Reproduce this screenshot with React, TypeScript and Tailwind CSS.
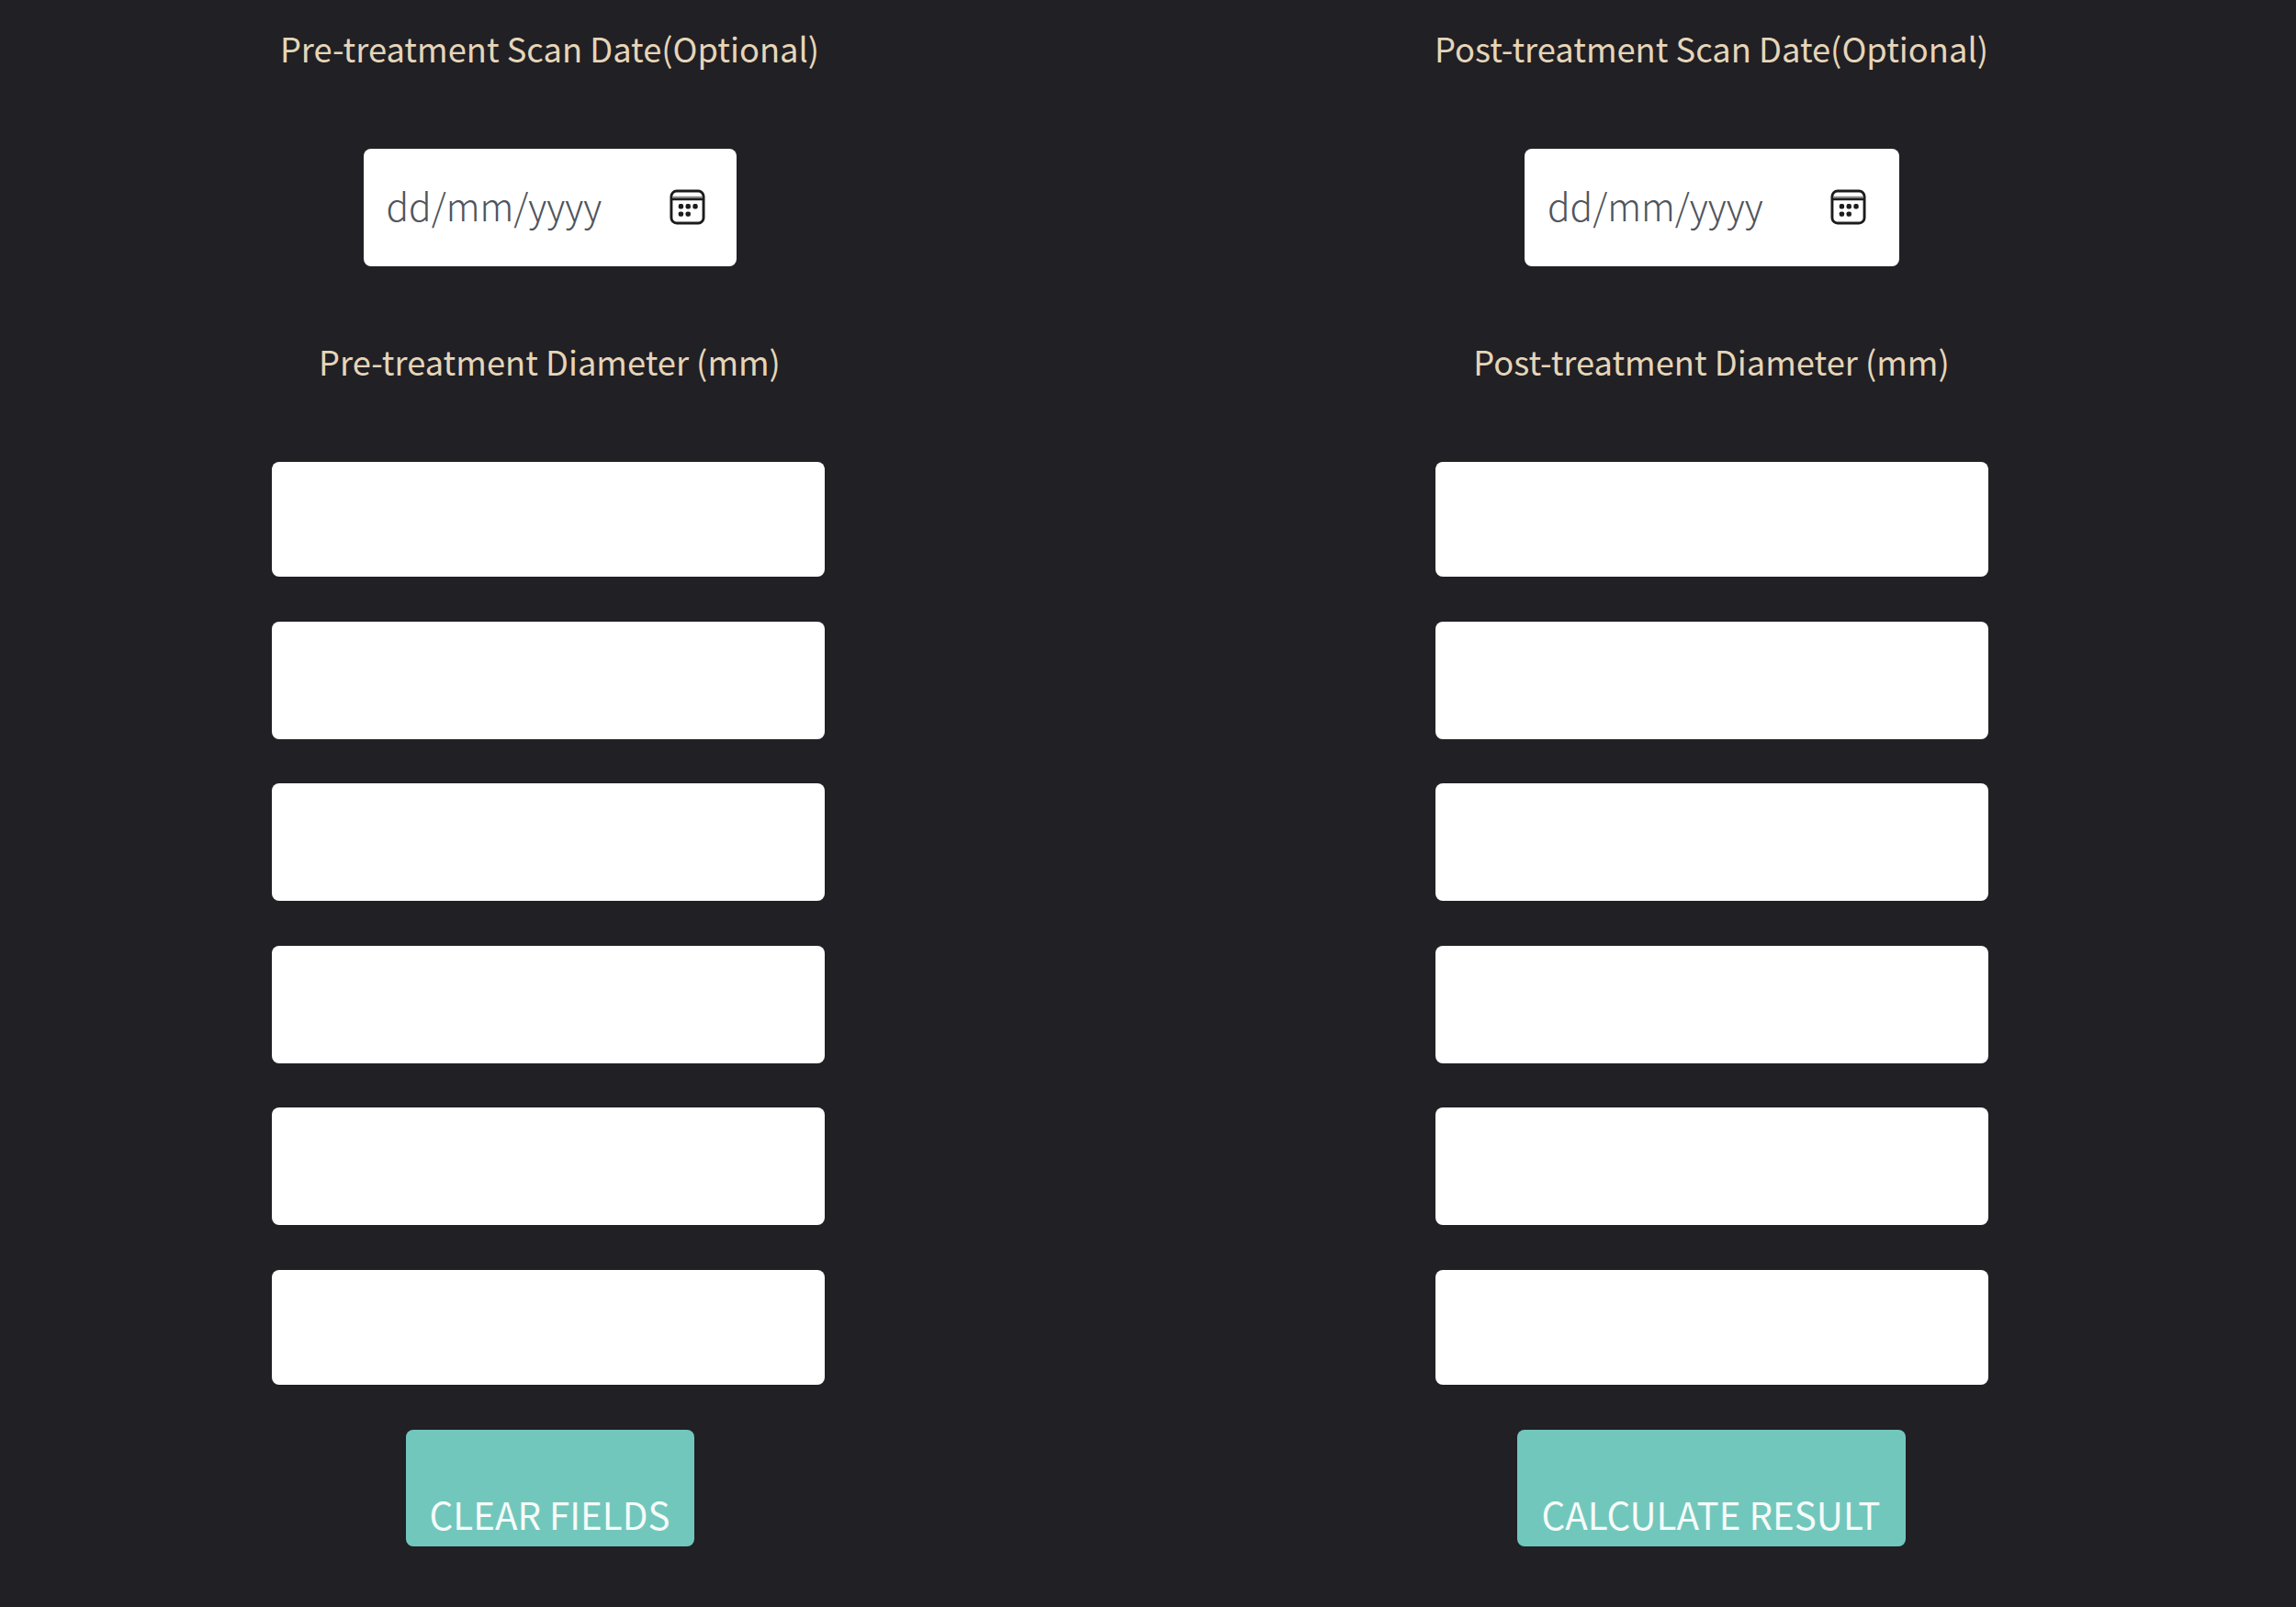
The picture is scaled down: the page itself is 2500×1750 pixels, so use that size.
function CalendarIcon() {
  return (
    <svg viewBox="0 0 40 40" className="h-[39px] w-[39px] shrink-0" fill="none">
      <rect x="2" y="2" width="36" height="36" rx="6" stroke="#1c1c1c" strokeWidth="3" />
      <path d="M2 11h36" stroke="#1c1c1c" strokeWidth="3" />
      <rect x="3" y="8" width="34" height="2" fill="#888" />
      <g fill="#1c1c1c">
        <rect x="10" y="16.5" width="5.5" height="5.5" rx="2" />
        <rect x="18" y="16.5" width="5.5" height="5.5" rx="2" />
        <rect x="26" y="16.5" width="5.5" height="5.5" rx="2" />
        <rect x="10" y="25" width="5.5" height="5.5" rx="2" />
        <rect x="18" y="25" width="5.5" height="5.5" rx="2" />
      </g>
    </svg>
  );
}

function Column({
  scan,
  diameter,
  button,
  dateClass,
  btnClass,
  labelClass,
}: {
  scan: string;
  diameter: string;
  button: string;
  dateClass: string;
  btnClass: string;
  labelClass: string;
}) {
  return (
    <div className="flex w-[602px] flex-col items-center">
      <div className={`flex h-[108px] w-full items-center justify-center whitespace-nowrap pb-[3px] text-[36.3px] text-[#e6d5b8] ${labelClass}`}>{scan}</div>
      <div className={`mt-[54px] flex h-[128px] items-center justify-between rounded-[8px] bg-white pl-[25px] ${dateClass}`}>
        <span className="pb-[5px] text-[40.7px] font-light text-[#50555c]">dd/mm/yyyy</span>
        <span className="pb-[2px]">
          <CalendarIcon />
        </span>
      </div>
      <div className={`mt-[54px] flex h-[102px] w-full items-center justify-center whitespace-nowrap pb-[3px] text-[36.3px] text-[#e6d5b8] ${labelClass}`}>{diameter}</div>
      <div className="mt-[57px] flex w-full flex-col gap-[48.6px]">
        <div className="h-[125px] w-full rounded-[8px] bg-white" />
        <div className="h-[128px] w-full rounded-[8px] bg-white" />
        <div className="h-[128px] w-full rounded-[8px] bg-white" />
        <div className="h-[128px] w-full rounded-[8px] bg-white" />
        <div className="h-[128px] w-full rounded-[8px] bg-white" />
        <div className="h-[125px] w-full rounded-[8px] bg-white" />
      </div>
      <div className={`mt-[49px] flex h-[127px] items-end justify-center rounded-[8px] bg-[#72c7bd] pb-[5px] text-[40.3px] leading-[60px] text-[#f6fbf8] ${btnClass}`}>
        {button}
      </div>
    </div>
  );
}

export default function App() {
  return (
    <div
      className="flex h-[1750px] w-[2500px] justify-between overflow-hidden bg-[#202025] pl-[296px] pr-[335px]"
      style={{ fontFamily: '"Noto Sans CJK JP", "Noto Sans", sans-serif' }}
    >
      <Column
        scan="Pre-treatment Scan Date(Optional)"
        diameter="Pre-treatment Diameter (mm)"
        button="CLEAR FIELDS"
        dateClass="ml-[3px] w-[406px] pr-[34px]"
        btnClass="ml-[3px] w-[314px]"
        labelClass="pl-[3px]"
      />
      <Column
        scan="Post-treatment Scan Date(Optional)"
        diameter="Post-treatment Diameter (mm)"
        button="CALCULATE RESULT"
        dateClass="w-[408px] pr-[36px]"
        btnClass="mr-[2px] w-[423px]"
        labelClass="pr-[1px]"
      />
    </div>
  );
}
